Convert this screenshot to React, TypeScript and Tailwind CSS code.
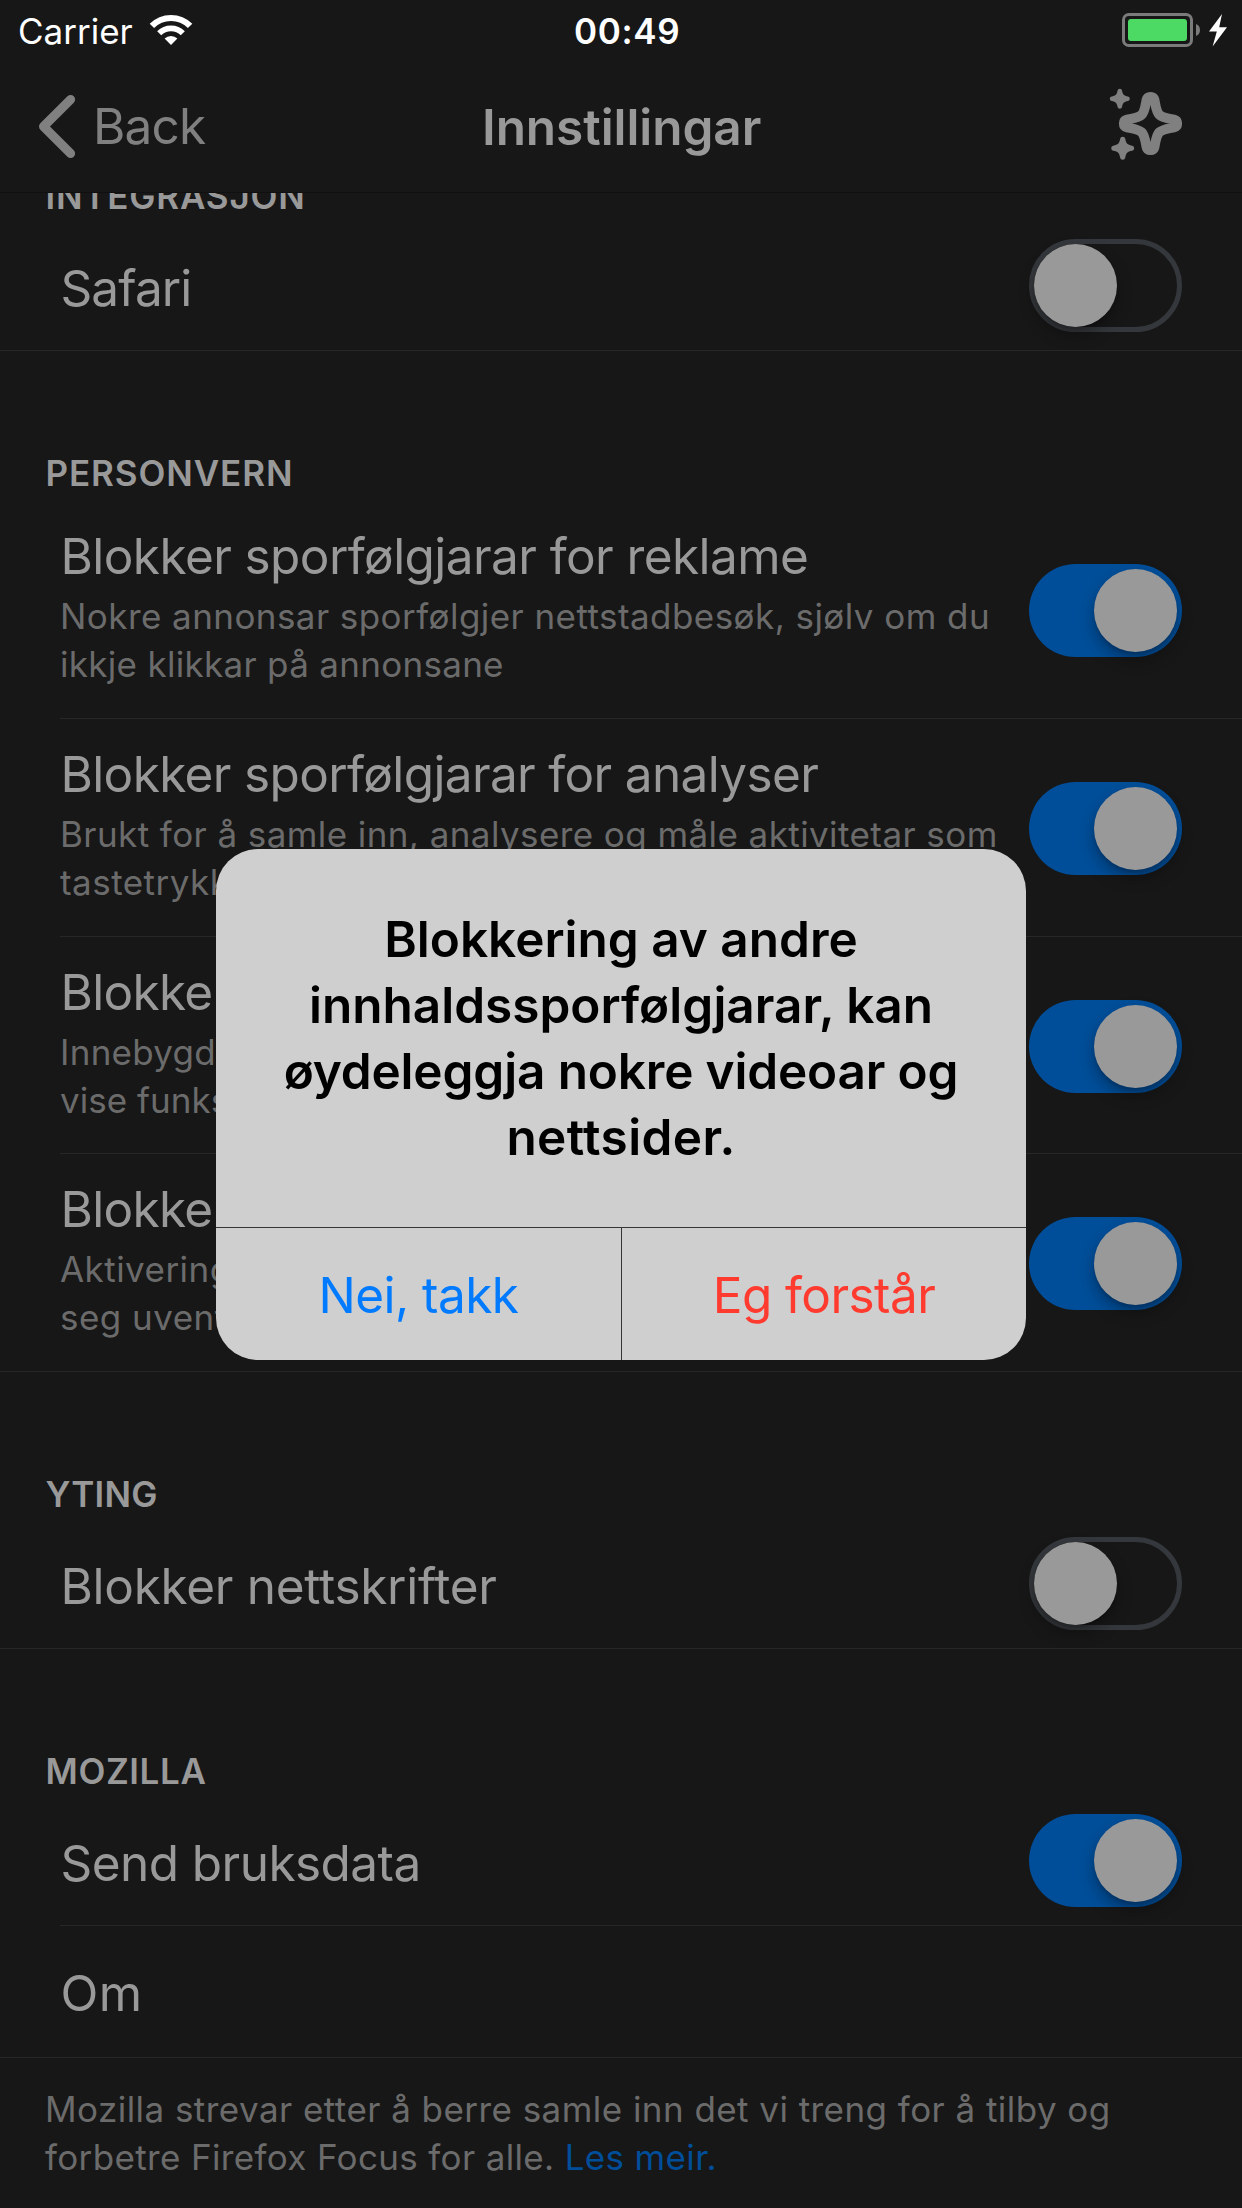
import type { ReactNode } from "react";

function Switch({ on }: { on: boolean }) {
  return on ? (
    <span className="flex h-[93px] w-[153px] shrink-0 justify-end rounded-full bg-[#004e99] p-[5px]">
      <span className="size-[83px] rounded-full bg-[#999999] shadow-[0_8px_16px_rgba(0,0,0,0.3),0_3px_3px_rgba(0,0,0,0.12)]" />
    </span>
  ) : (
    <span className="flex h-[93px] w-[153px] shrink-0 rounded-full border-[5px] border-[#34373b]">
      <span className="size-[83px] rounded-full bg-[#999999] shadow-[0_8px_16px_rgba(0,0,0,0.3),0_3px_3px_rgba(0,0,0,0.12)]" />
    </span>
  );
}

function WifiIcon() {
  return (
    <svg className="mt-[15px] ml-[17px] h-[30px] w-[42px] overflow-visible" viewBox="0 0 42 30" fill="none" stroke="#fff">
      <path d="M1.9 10.9A27 27 0 0 1 40.1 10.9" strokeWidth="6.2" />
      <path d="M9.2 18.2A16.7 16.7 0 0 1 32.8 18.2" strokeWidth="5.8" />
      <path d="M21 30L14.6 23.6A9 9 0 0 1 27.4 23.6Z" fill="#fff" stroke="none" />
    </svg>
  );
}

function BatteryIcon() {
  return (
    <svg className="mt-[13px] h-[34px] w-[106px]" viewBox="0 0 106 34">
      <rect x="1.5" y="1.5" width="68" height="31" rx="5.5" fill="none" stroke="#7b7b7b" strokeWidth="3" />
      <rect x="6" y="6" width="59" height="22" rx="3" fill="#4cd964" />
      <path d="M74 11C79.300 12.500 79.300 21.500 74 23Z" fill="#7b7b7b" />
      <path d="M100 1L87 18.500H94.800L90.600 33.500L105 14.200H97.200Z" fill="#fff" />
    </svg>
  );
}

const SMALL_STAR =
  "M-.22-.82Q-.2-1 0-1T.22-.82C.3-.4.4-.3.82-.22Q1-.2 1 0T.82.22C.4.3.3.4.22.82Q.2 1 0 1T-.22.82C-.3.4-.4.3-.82.22Q-1 .2-1 0T-.82-.22C-.4-.3-.3-.4-.22-.82Z";

function SparklesIcon() {
  return (
    <svg className="h-[76px] w-[74px]" viewBox="1109 86 74 76">
      <path
        transform="translate(1150.5 123.500)"
        d="M0-26.700C2-26.700 3.500-25.600 4-23.500C5.200-17.500 5.800-11.800 8.800-8.800C11.800-5.800 17.500-5.200 23.500-4C25.600-3.500 26.700-2 26.700 0S25.600 3.500 23.500 4C17.500 5.200 11.800 5.800 8.800 8.800C5.800 11.800 5.200 17.500 4 23.500C3.500 25.600 2 26.700 0 26.700S-3.500 25.600-4 23.500C-5.200 17.500-5.800 11.800-8.800 8.800C-11.800 5.800-17.500 5.200-23.500 4C-25.600 3.500-26.700 2-26.700 0S-25.600-3.500-23.500-4C-17.500-5.200-11.800-5.800-8.800-8.800C-5.800-11.800-5.200-17.500-4-23.500C-3.500-25.600-2-26.700 0-26.700Z"
        fill="none"
        stroke="#808080"
        strokeWidth="9.800"
        strokeLinejoin="round"
      />
      <path transform="translate(1119.800 98.700) scale(10)" d={SMALL_STAR} fill="#808080" />
      <path transform="translate(1122.700 148.300) scale(11.500)" d={SMALL_STAR} fill="#808080" />
    </svg>
  );
}

function SectionTitle({ children, className }: { children: ReactNode; className: string }) {
  return (
    <h2 className={`text-[35px] leading-[42px] font-semibold text-[#999999] ${className}`}>{children}</h2>
  );
}

function SimpleRow({ title, on, inset = false, className }: { title: string; on?: boolean; inset?: boolean; className: string }) {
  return (
    <div
      className={`flex h-[132px] items-start justify-between border-b border-[#272727] pr-[60px] ${inset ? "ml-[60px]" : "pl-[60px]"}`}
    >
      <span className={`text-[49.5px] leading-[60px] whitespace-nowrap text-[#999999] ${className}`}>{title}</span>
      {on !== undefined && (
        <span className="flex pt-[20px]">
          <Switch on={on} />
        </span>
      )}
    </div>
  );
}

type Tracker = { title: string; lines: [string, string]; row: string; heading: string; first: string; second: string };

const trackers: Tracker[] = [
  {
    title: "Blokker sporfølgjarar for reklame",
    lines: ["Nokre annonsar sporfølgjer nettstadbesøk, sjølv om du", "ikkje klikkar på annonsane"],
    row: "ml-[60px] h-[218px]",
    heading: "tracking-[-0.580px]",
    first: "tracking-[0.440px]",
    second: "tracking-[0.300px]",
  },
  {
    title: "Blokker sporfølgjarar for analyser",
    lines: ["Brukt for å samle inn, analysere og måle aktivitetar som", "tastetrykk og rulling"],
    row: "ml-[60px] h-[218px]",
    heading: "tracking-[-0.640px]",
    first: "tracking-[0.420px]",
    second: "tracking-[0.460px]",
  },
  {
    title: "Blokker sosiale",
    lines: ["Innebygd for å", "vise funksjonar"],
    row: "ml-[60px] h-[217px]",
    heading: "tracking-[-0.700px]",
    first: "tracking-[0.280px]",
    second: "tracking-[0.050px]",
  },
  {
    title: "Blokker andre",
    lines: ["Aktivering kan", "seg uventa"],
    row: "pl-[60px] h-[218px]",
    heading: "tracking-[-0.700px]",
    first: "tracking-[0.460px]",
    second: "tracking-[0.460px]",
  },
];

function TrackerRow({ title, lines, row, heading, first, second }: Tracker) {
  return (
    <div className={`flex items-start justify-between border-b border-[#272727] pr-[60px] ${row}`}>
      <div className="pt-[25px] whitespace-nowrap">
        <div className={`pl-[0.5px] text-[49.5px] leading-[60px] text-[#999999] ${heading}`}>{title}</div>
        <div className="mt-[6px] text-[35px] leading-[48px] text-[#6b6b6b]">
          <div className={first}>{lines[0]}</div>
          <div className={second}>{lines[1]}</div>
        </div>
      </div>
      <span className="flex pt-[63px]">
        <Switch on />
      </span>
    </div>
  );
}

export default function App() {
  return (
    <div className="relative flex h-[2208px] w-[1242px] flex-col overflow-hidden bg-[#171717] font-['Inter',sans-serif]">
      <div className="grid h-[60px] shrink-0 grid-cols-[574px_1fr_120px] text-[35px] leading-[42px] text-white">
        <div className="flex pl-[18px]">
          <span className="pt-[10px]">Carrier</span>
          <WifiIcon />
        </div>
        <span className="pt-[10px] font-semibold tracking-[0.660px]">00:49</span>
        <BatteryIcon />
      </div>

      <header className="grid h-[133px] shrink-0 grid-cols-[482px_1fr_133px] border-b border-[#101010] text-[49.5px] leading-[60px]">
        <div className="flex pl-[36px] text-[#808080]">
          <svg className="mt-[32px] h-[70px] w-[44px]" viewBox="36 92 44 70" fill="none">
            <path d="M70.600 99.500L43.500 126.500L70.600 153.500" stroke="#808080" strokeWidth="9" strokeLinecap="round" strokeLinejoin="round" />
          </svg>
          <span className="ml-[13px] pt-[36px] tracking-[-0.800px]">Back</span>
        </div>
        <h1 className="pt-[37px] font-semibold tracking-[-0.060px] text-[#999999]">Innstillingar</h1>
        <div className="pt-[26px]">
          <SparklesIcon />
        </div>
      </header>

      <main className="flex-1 overflow-hidden">
        <section className="-mt-[18px]">
          <SectionTitle className="pb-[2px] pl-[45.5px] tracking-[0.800px]">INTEGRASJON</SectionTitle>
          <SimpleRow title="Safari" on={false} className="pt-[39px] pl-[0.5px] tracking-[-0.900px]" />
        </section>

        <section>
          <SectionTitle className="pt-[101px] pb-[7px] pl-[45.5px] tracking-[0.900px]">PERSONVERN</SectionTitle>
          {trackers.map((t) => (
            <TrackerRow key={t.title} {...t} />
          ))}
        </section>

        <section>
          <SectionTitle className="pt-[101px] pb-[2px] pl-[45.5px] tracking-[0.250px]">YTING</SectionTitle>
          <SimpleRow title="Blokker nettskrifter" on={false} className="pt-[39px] pl-[0.5px] tracking-[-0.300px]" />
        </section>

        <section>
          <SectionTitle className="pt-[101px] pb-[2px] pl-[45.5px] tracking-[0.600px]">MOZILLA</SectionTitle>
          <SimpleRow title="Send bruksdata" on inset className="pt-[39px] pl-[0.5px] tracking-[-0.550px]" />
          <SimpleRow title="Om" className="pt-[37px] pl-[0.5px] tracking-[0.500px]" />
        </section>

        <p className="pt-[27px] pl-[45px] text-[35px] leading-[48px] tracking-[0.450px] whitespace-nowrap text-[#6b6b6b]">
          Mozilla strevar etter å berre samle inn det vi treng for å tilby og
          <br />
          <span className="tracking-[0.350px]">forbetre Firefox Focus for alle. </span>
          <span className="tracking-[0.350px] text-[#004e99]">Les meir.</span>
        </p>
      </main>

      <div className="absolute inset-0 flex items-center justify-center pt-px">
        <div role="alertdialog" className="flex h-[511px] w-[810px] flex-col overflow-hidden rounded-[42px] bg-[#cfcfcf] text-[49.5px]">
          <div className="h-[378px] pt-[57px] text-center leading-[66px] font-semibold whitespace-nowrap text-black">
            <div>Blokkering av andre</div>
            <div>innhaldssporfølgjarar, kan</div>
            <div className="tracking-[-0.170px]">øydeleggja nokre videoar og</div>
            <div className="tracking-[0.400px]">nettsider.</div>
          </div>
          <div className="grid flex-1 grid-cols-[406px_1fr] border-t border-[#363636] text-center leading-[60px] tracking-[-0.570px]">
            <button className="flex justify-center border-r border-[#363636] pt-[37px] text-[#007aff]">Nei, takk</button>
            <button className="flex justify-center pt-[37px] text-[#ff3b30]">Eg forstår</button>
          </div>
        </div>
      </div>
    </div>
  );
}
